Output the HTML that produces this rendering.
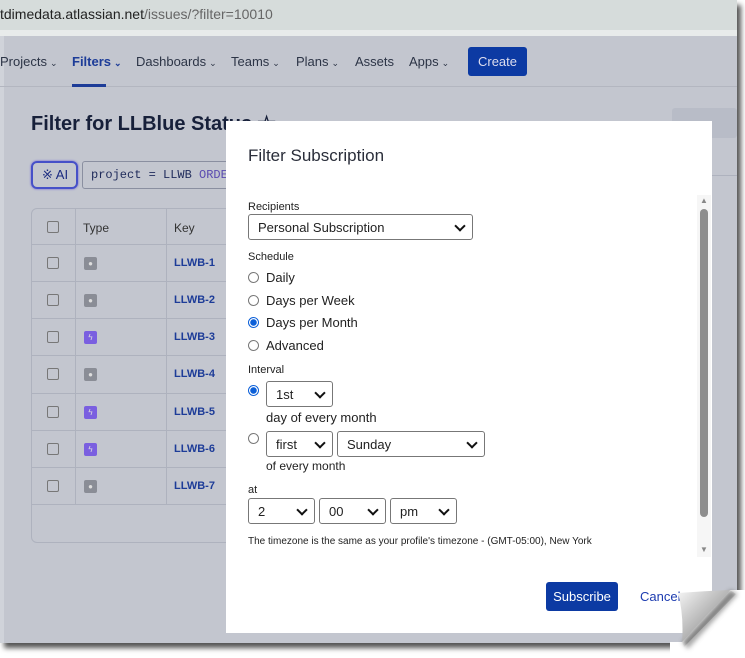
<!DOCTYPE html>
<html><head><meta charset="utf-8"><style>
*{box-sizing:border-box;margin:0;padding:0}
body{width:745px;height:658px;background:#fff;position:relative;overflow:hidden;font-family:"Liberation Sans",sans-serif}
.abs{position:absolute}
.page{left:0;top:0;width:737px;height:643px;background:#c3c6cf;box-shadow:4px 5px 5px #555}
.url{left:0;top:0;width:737px;height:30px;background:#d6dcdb;font-size:14px;color:#222;padding:6px 0 0 0}
.url span{color:#666}
.strip{left:0;top:30px;width:737px;height:6px;background:#e8ebeb}
.nav{top:36px;left:0;width:737px;height:51px;border-bottom:1px solid #b3b6c0}
.nav .it{position:absolute;top:18px;font-size:13px;color:#2c3446}
.chev{font-size:9px;margin-left:3px}
.create{left:468px;top:47px;width:59px;height:29px;background:#0c3aa3;border-radius:3px;color:#dde;font-size:13px;text-align:center;line-height:29px}
.title{left:31px;top:111px;font-size:20px;font-weight:bold;color:#17203a}
.ai{left:31px;top:161px;width:47px;height:28px;border:2px solid #4650c8;border-radius:6px;font-size:13px;color:#1a2a80;line-height:24px;padding-left:9px;box-shadow:0 0 2px #6a5ad8}
.q{left:82px;top:161px;width:160px;height:28px;border:1px solid #8a8fa0;border-radius:3px;font-family:"Liberation Mono",monospace;font-size:12px;color:#1e2a5a;line-height:26px;padding-left:8px}
.tbl{left:31px;top:208px;width:220px;height:335px;border:1px solid #aeb2be;border-radius:6px}
.row{position:absolute;left:0;width:220px;border-bottom:1px solid #aeb2be;height:37px}
.cb{position:absolute;left:15px;top:12px;width:12px;height:12px;border:1px solid #777;border-radius:2px}
.ic{position:absolute;left:52px;top:12px;width:13px;height:13px;border-radius:2px;color:#ddd;font-size:8px;text-align:center;line-height:13px}
.key{position:absolute;left:142px;top:12px;font-size:11px;color:#1d3c98;font-weight:bold}
.vl{position:absolute;top:0;width:1px;height:296px;background:#aeb2be}
.dlg{left:226px;top:121px;width:486px;height:512px;background:#fff}
.dt{left:248px;top:146px;font-size:17px;color:#2a2e3a}
.lab{position:absolute;font-size:11px;color:#222;left:248px}
.sel{position:absolute;height:26px;border:1px solid #777;border-radius:3px;font-size:13px;color:#222;padding:5px 0 0 9px;background:#fff}
.sel:after{content:"";position:absolute;right:8px;top:7px;width:6px;height:6px;border-right:2px solid #111;border-bottom:2px solid #111;transform:rotate(45deg)}
.rad{position:absolute;left:248px;width:11px;height:11px;border:1px solid #777;border-radius:50%}
.rad.on{border:1px solid #0b5fd8;background:radial-gradient(#0b5fd8 0 3px,#fff 3.5px)}
.opt{position:absolute;left:266px;font-size:13px;color:#222}
.sb{left:697px;top:195px;width:14px;height:362px;background:#f6f6f6}
</style></head><body>
<div class="abs page"></div>
<div class="abs url">tdimedata.atlassian.net<span>/issues/?filter=10010</span></div>
<div class="abs strip"></div>
<div class="abs" style="left:0;top:36px;width:4px;height:607px;background:#d0d3da"></div>
<div class="abs nav">
<div class="it" style="left:0">Projects<span class="chev">&#8964;</span></div>
<div class="it" style="left:72px;color:#1d3c98;font-weight:bold">Filters<span class="chev">&#8964;</span></div>
<div class="it" style="left:136px">Dashboards<span class="chev">&#8964;</span></div>
<div class="it" style="left:231px">Teams<span class="chev">&#8964;</span></div>
<div class="it" style="left:296px">Plans<span class="chev">&#8964;</span></div>
<div class="it" style="left:355px">Assets</div>
<div class="it" style="left:409px">Apps<span class="chev">&#8964;</span></div>
</div>
<div class="abs" style="left:72px;top:84px;width:34px;height:3px;background:#1d3c98"></div>
<div class="abs create">Create</div>
<div class="abs title">Filter for LLBlue Status ☆</div>
<div class="abs" style="left:672px;top:108px;width:65px;height:30px;background:#b8bcc7;border-radius:3px"></div>
<div class="abs ai">※ AI</div>
<div class="abs q">project = LLWB <span style="color:#5a4bb0">ORDER</span></div>
<div class="abs tbl">
<div class="row" style="top:0;height:36px"><div class="cb" style="top:12px"></div><div style="position:absolute;left:51px;top:12px;font-size:12px;color:#333">Type</div><div style="position:absolute;left:142px;top:12px;font-size:12px;color:#333">Key</div></div>
<div class="row" style="top:36px"><div class="cb"></div><div class="ic" style="background:#8a8d96">●</div><div class="key">LLWB-1</div></div>
<div class="row" style="top:73px"><div class="cb"></div><div class="ic" style="background:#8a8d96">●</div><div class="key">LLWB-2</div></div>
<div class="row" style="top:110px"><div class="cb"></div><div class="ic" style="background:#7a5fe0">ϟ</div><div class="key">LLWB-3</div></div>
<div class="row" style="top:147px;height:38px"><div class="cb"></div><div class="ic" style="background:#8a8d96">●</div><div class="key">LLWB-4</div></div>
<div class="row" style="top:185px"><div class="cb"></div><div class="ic" style="background:#7a5fe0">ϟ</div><div class="key">LLWB-5</div></div>
<div class="row" style="top:222px"><div class="cb"></div><div class="ic" style="background:#7a5fe0">ϟ</div><div class="key">LLWB-6</div></div>
<div class="row" style="top:259px"><div class="cb"></div><div class="ic" style="background:#8a8d96">●</div><div class="key">LLWB-7</div></div>
<div class="vl" style="left:43px"></div><div class="vl" style="left:134px"></div>
</div>
<div class="abs" style="left:712px;top:175px;width:25px;height:1px;background:#aeb2be"></div>
<div class="abs dlg"></div>
<div class="abs dt">Filter Subscription</div>
<div class="abs sb"><div style="position:absolute;left:3px;top:14px;width:8px;height:308px;background:#8e8e8e;border-radius:4px"></div><div style="position:absolute;left:3px;top:1px;font-size:8px;color:#888">▲</div><div style="position:absolute;left:3px;top:350px;font-size:8px;color:#888">▼</div></div>
<div class="lab" style="top:201px">Recipients</div>
<div class="sel" style="left:248px;top:214px;width:225px">Personal Subscription</div>
<div class="lab" style="top:251px">Schedule</div>
<div class="rad" style="top:272px"></div><div class="opt" style="top:270px">Daily</div>
<div class="rad" style="top:295px"></div><div class="opt" style="top:293px">Days per Week</div>
<div class="rad on" style="top:317px"></div><div class="opt" style="top:315px">Days per Month</div>
<div class="rad" style="top:340px"></div><div class="opt" style="top:338px">Advanced</div>
<div class="lab" style="top:364px">Interval</div>
<div class="rad on" style="top:385px"></div>
<div class="sel" style="left:266px;top:381px;width:67px">1st</div>
<div class="opt" style="top:410px">day of every month</div>
<div class="rad" style="top:433px"></div>
<div class="sel" style="left:266px;top:431px;width:67px">first</div>
<div class="sel" style="left:337px;top:431px;width:148px">Sunday</div>
<div class="opt" style="top:459px;font-size:12px">of every month</div>
<div class="lab" style="top:484px">at</div>
<div class="sel" style="left:248px;top:498px;width:67px">2</div>
<div class="sel" style="left:319px;top:498px;width:67px">00</div>
<div class="sel" style="left:390px;top:498px;width:67px">pm</div>
<div class="lab" style="top:536px;font-size:10px">The timezone is the same as your profile's timezone - (GMT-05:00), New York</div>
<div class="abs" style="left:546px;top:582px;width:72px;height:29px;background:#0c3aa3;border-radius:3px;color:#fff;font-size:13px;text-align:center;line-height:29px">Subscribe</div>
<div class="abs" style="left:640px;top:589px;font-size:13px;color:#1d3cb0">Cancel</div>
<svg class="abs" style="left:670px;top:585px" width="75" height="73">
<defs>
<linearGradient id="g" x1="0" y1="0" x2="1" y2="1"><stop offset="0" stop-color="#f6f6f6"/><stop offset="0.55" stop-color="#b0b0b0"/><stop offset="1" stop-color="#707070"/></linearGradient>
<filter id="b"><feGaussianBlur stdDeviation="2.5"/></filter>
</defs>
<polygon points="60,5 75,5 75,73 0,73 0,57 12,57" fill="#fff"/>
<polygon points="60,5 68,9 18,64 12,57" fill="#666" filter="url(#b)" opacity="0.8"/>
<polygon points="60,5 75,5 75,73 0,73 0,57 12,57 14,62 66,9" fill="#fff" opacity="0.3"/>
<path d="M8,8 Q35,6 60,5 L12,57 Q14,30 8,8 Z" fill="url(#g)"/>
</svg>
</body></html>
